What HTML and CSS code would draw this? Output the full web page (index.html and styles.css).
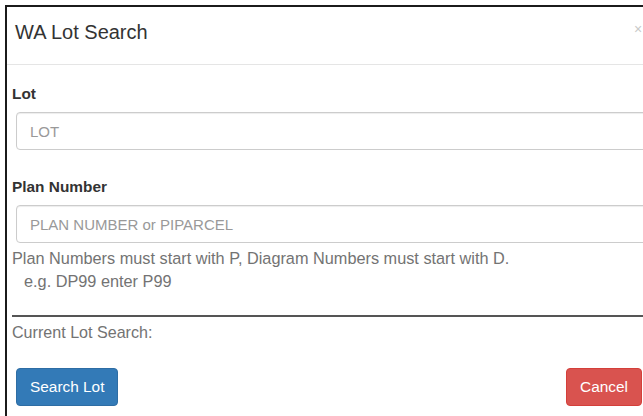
FILE: index.html
```html
<!DOCTYPE html>
<html lang="en">
<head>
<meta charset="utf-8">
<title>WA Lot Search</title>
<link rel="stylesheet" href="styles.css">
</head>
<body>
<div class="modal">
  <div class="modal-header">
    <h4 class="modal-title">WA Lot Search</h4>
    <span class="close">&times;</span>
  </div>
  <div class="modal-body">
    <div class="field">
      <label class="field-label" for="lot">Lot</label>
      <input class="form-control" id="lot" type="text" placeholder="LOT">
    </div>
    <div class="field">
      <label class="field-label" for="plan">Plan Number</label>
      <input class="form-control" id="plan" type="text" placeholder="PLAN NUMBER or PIPARCEL">
    </div>
    <p class="help">Plan Numbers must start with P, Diagram Numbers must start with D.<br><span class="help-example">e.g. DP99 enter P99</span></p>
    <hr class="divider">
    <p class="current">Current Lot Search:</p>
  </div>
  <div class="modal-footer">
    <button class="btn btn-primary" type="button">Search Lot</button>
    <button class="btn btn-danger" type="button">Cancel</button>
  </div>
</div>
</body>
</html>
```
FILE: styles.css
```css
html, body {
  margin: 0;
  padding: 0;
  overflow: hidden;
  background: #fff;
}

body {
  font-family: "Liberation Sans", Arial, sans-serif;
  font-size: 15.4px;
  line-height: 22px;
  color: #333;
}

.modal {
  margin: 5px 0 0 5px;
  width: 680px;
  height: 420px;
  border-top: 2px solid #1b1b1b;
  border-left: 2px solid #1b1b1b;
  background: #fff;
}

.modal-header {
  position: relative;
  box-sizing: border-box;
  height: 58px;
  padding: 12px 0 0 8px;
  border-bottom: 1px solid #e5e5e5;
}

.modal-title {
  margin: 0;
  font-size: 20px;
  font-weight: normal;
  line-height: 26px;
  color: #333;
}

.close {
  position: absolute;
  left: 627px;
  top: 14px;
  font-size: 14px;
  line-height: 16px;
  color: #c9c9c9;
}

.modal-body {
  padding: 18px 0 0 5px;
}

.field {
  margin-bottom: 26px;
}

.field-label {
  display: block;
  font-weight: bold;
  margin-bottom: 7px;
}

.form-control {
  display: block;
  box-sizing: border-box;
  margin-left: 4px;
  width: 700px;
  height: 38px;
  padding: 0 13px;
  font-family: inherit;
  font-size: 15px;
  color: #555;
  background: #fff;
  border: 1px solid #ccc;
  border-radius: 4px;
  box-shadow: inset 0 1px 1px rgba(0, 0, 0, .075);
  outline: none;
}

.form-control::placeholder {
  color: #999;
}

.help {
  margin: -22px 0 0;
  font-size: 16.3px;
  line-height: 23px;
  color: #737373;
}

.help-example {
  padding-left: 12px;
}

.divider {
  margin: 22px 0 4px;
  border: 0;
  border-top: 2px solid #555;
}

.current {
  margin: 0;
  font-size: 16.1px;
  color: #737373;
}

.modal-footer {
  width: 626px;
  padding: 25px 0 0 9px;
  display: flex;
  justify-content: space-between;
}

.btn {
  height: 38px;
  padding: 0 13px;
  font-family: inherit;
  font-size: 15.4px;
  color: #fff;
  border: 1px solid transparent;
  border-radius: 4px;
}

.btn-primary {
  background: #337ab7;
  border-color: #2e6da4;
}

.btn-danger {
  background: #d9534f;
  border-color: #d43f3a;
}
```
